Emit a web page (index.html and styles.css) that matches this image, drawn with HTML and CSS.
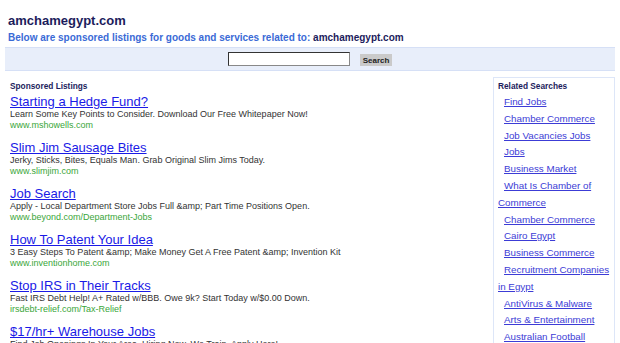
FILE: index.html
```html
<!DOCTYPE html>
<html lang="en">
<head>
    <meta charset="UTF-8">
    <title>amchamegypt.com</title>
    <link rel="stylesheet" href="styles.css">
</head>
<body>
    <div class="header">
        <h1>amchamegypt.com</h1>
        <p class="intro">Below are sponsored listings for goods and services related to: <span>amchamegypt.com</span></p>
    </div>

    <div class="searchbar">
        <input type="text" class="search-input">
        <button class="search-btn">Search</button>
    </div>

    <div class="main">
        <div class="listings">
            <h3>Sponsored Listings</h3>

            <div class="ad">
                <a href="#" class="ad-title">Starting a Hedge Fund?</a>
                <div class="ad-desc">Learn Some Key Points to Consider. Download Our Free Whitepaper Now!</div>
                <div class="ad-url">www.mshowells.com</div>
            </div>
            <div class="ad">
                <a href="#" class="ad-title">Slim Jim Sausage Bites</a>
                <div class="ad-desc">Jerky, Sticks, Bites, Equals Man. Grab Original Slim Jims Today.</div>
                <div class="ad-url">www.slimjim.com</div>
            </div>
            <div class="ad">
                <a href="#" class="ad-title">Job Search</a>
                <div class="ad-desc">Apply - Local Department Store Jobs Full &amp;amp; Part Time Positions Open.</div>
                <div class="ad-url">www.beyond.com/Department-Jobs</div>
            </div>
            <div class="ad">
                <a href="#" class="ad-title">How To Patent Your Idea</a>
                <div class="ad-desc">3 Easy Steps To Patent &amp;amp; Make Money Get A Free Patent &amp;amp; Invention Kit</div>
                <div class="ad-url">www.inventionhome.com</div>
            </div>
            <div class="ad">
                <a href="#" class="ad-title">Stop IRS in Their Tracks</a>
                <div class="ad-desc">Fast IRS Debt Help! A+ Rated w/BBB. Owe 9k? Start Today w/$0.00 Down.</div>
                <div class="ad-url">irsdebt-relief.com/Tax-Relief</div>
            </div>
            <div class="ad">
                <a href="#" class="ad-title">$17/hr+ Warehouse Jobs</a>
                <div class="ad-desc">Find Job Openings In Your Area. Hiring Now. We Train. Apply Here!</div>
                <div class="ad-url">www.jobs-warehouse.com</div>
            </div>
        </div>

        <div class="related">
            <h3>Related Searches</h3>
            <div class="related-links">
                <a href="#">Find Jobs</a><br>
                <a href="#">Chamber Commerce</a><br>
                <a href="#">Job Vacancies Jobs</a><br>
                <a href="#">Jobs</a><br>
                <a href="#">Business Market</a><br>
                <a href="#">What Is Chamber of Commerce</a><br>
                <a href="#">Chamber Commerce</a><br>
                <a href="#">Cairo Egypt</a><br>
                <a href="#">Business Commerce</a><br>
                <a href="#">Recruitment Companies in Egypt</a><br>
                <a href="#">AntiVirus &amp; Malware</a><br>
                <a href="#">Arts &amp; Entertainment</a><br>
                <a href="#">Australian Football</a><br>
                <a href="#">Auto Insurance</a>
            </div>
        </div>
    </div>
</body>
</html>
```

FILE: styles.css
```css
* {
    box-sizing: border-box;
    margin: 0;
    padding: 0;
}
body {
    background: white;
    font-family: "Liberation Sans", Arial, sans-serif;
    padding: 0 5px;
    overflow: hidden;
    height: 343px;
}
.header {
    padding: 13px 3px 2px;
}
h1 {
    font-size: 13px;
    color: #1c1c5c;
    line-height: 16px;
}
.intro {
    font-size: 10px;
    font-weight: bold;
    color: #3a6ad6;
    line-height: 14px;
    margin-top: 2px;
}
.intro span {
    color: #1c1c5c;
}
.searchbar {
    display: flex;
    justify-content: center;
    align-items: center;
    gap: 10px;
    height: 24px;
    background: #e8eefa;
    border-top: 1px solid #d6e0f6;
    border-bottom: 1px solid #d6e0f6;
}
.search-input {
    width: 122px;
    height: 14px;
    border: 1px solid #888;
    border-top-color: #333;
    border-left-color: #333;
    background: white;
}
.search-btn {
    font-family: "Liberation Sans", Arial, sans-serif;
    font-size: 8px;
    font-weight: bold;
    color: #222;
    background: #cacaca;
    border: none;
    width: 32px;
    height: 12px;
    margin-top: 2px;
}
.main {
    display: flex;
    align-items: flex-start;
    padding-top: 6px;
}
.listings {
    flex: 1;
    padding: 3px 5px 0;
}
h3 {
    font-size: 8.3px;
    color: #1c1c5c;
    line-height: 12px;
}
.ad {
    margin-top: 2px;
    margin-bottom: 9px;
}
.ad-title {
    display: block;
    width: max-content;
    font-size: 13px;
    color: #1a1ae6;
    line-height: 15px;
}
.ad-desc {
    font-size: 9px;
    color: #333;
    line-height: 11px;
}
.ad-url {
    font-size: 9px;
    color: #3aa63a;
    line-height: 11px;
}
.related {
    width: 122px;
    border: 1px solid #dde6f8;
    border-bottom: none;
    padding: 2px 0 0 4px;
    min-height: 270px;
}
.related-links {
    margin-top: 2px;
    font-size: 9.8px;
    line-height: 16.8px;
}
.related-links a {
    color: #3c3cd6;
    margin-left: 6px;
}
```
